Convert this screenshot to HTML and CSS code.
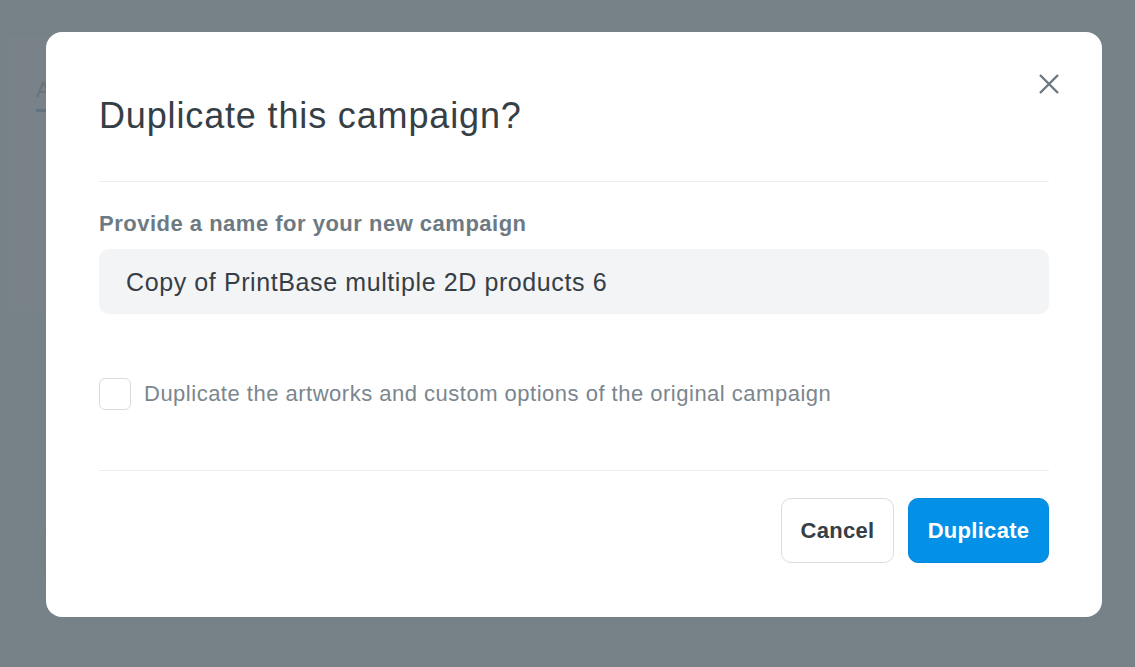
FILE: index.html
```html
<!DOCTYPE html>
<html lang="en">
<head>
  <meta charset="UTF-8">
  <title>Duplicate campaign</title>
  <link rel="stylesheet" href="styles.css">
</head>
<body>
  <div class="page">
    <div class="card">
      <div class="tabs"><span class="tab active">All</span></div>
    </div>
    <div class="field-ghost"></div>
  </div>

  <div class="overlay">
    <div class="modal">
      <button class="close" aria-label="Close">
        <svg width="20" height="20" viewBox="0 0 20 20"><path d="M1 1L19 19M19 1L1 19" stroke="#6c7780" stroke-width="2.4" fill="none"/></svg>
      </button>
      <div class="modal-header">
        <h2>Duplicate this campaign?</h2>
      </div>
      <div class="modal-body">
        <label class="field-label" for="name">Provide a name for your new campaign</label>
        <input id="name" class="field-input" type="text" value="Copy of PrintBase multiple 2D products 6">
        <label class="check">
          <span class="box"></span>
          <span>Duplicate the artworks and custom options of the original campaign</span>
        </label>
      </div>
      <div class="modal-footer">
        <button class="btn btn-default">Cancel</button>
        <button class="btn btn-primary">Duplicate</button>
      </div>
    </div>
  </div>
</body>
</html>
```

FILE: styles.css
```css
* { margin: 0; padding: 0; box-sizing: border-box; }
body {
  font-family: "Liberation Sans", Arial, sans-serif;
  background: #eef0f2;
  width: 1135px;
  height: 667px;
  overflow: hidden;
}

/* page behind the dialog */
.page { padding: 37px 0 0 8px; }
.card {
  width: 500px;
  height: 273px;
  background: #fdfdfe;
  padding: 40px 28px;
}
.tab {
  display: inline-block;
  font-size: 22px;
  color: #6c7780;
  padding-bottom: 6px;
  border-bottom: 3px solid #4a7a99;
}
.field-ghost {
  margin: 218px 0 0 36px;
  width: 300px;
  height: 52px;
  border: 1px solid #cfd4d8;
  border-radius: 8px;
}

/* dialog */
.overlay {
  position: fixed;
  inset: 0;
  background: rgba(102, 113, 121, 0.88);
  padding: 32px 0 0 46px;
}
.modal {
  position: relative;
  width: 1056px;
  height: 585px;
  background: #fff;
  border-radius: 16px;
  padding: 0 53px;
}
.close {
  position: absolute;
  top: 42px;
  right: 43px;
  width: 20px;
  height: 20px;
  border: none;
  background: none;
  cursor: pointer;
}
.close svg { display: block; }
.modal-header {
  padding: 62px 0 43px;
  border-bottom: 1px solid #eceef0;
}
.modal-header h2 {
  font-size: 36px;
  line-height: 44px;
  font-weight: normal;
  letter-spacing: 0.85px;
  color: #363e46;
}
.modal-body {
  padding: 29px 0 60px;
  border-bottom: 1px solid #eceef0;
}
.field-label {
  display: block;
  font-size: 22px;
  line-height: 26px;
  font-weight: bold;
  letter-spacing: 0.5px;
  color: #6e7a83;
  margin-bottom: 12px;
}
.field-input {
  display: block;
  width: 100%;
  height: 65px;
  border: none;
  border-radius: 10px;
  background: #f3f4f6;
  padding: 2px 27px 0;
  font-family: inherit;
  font-size: 25px;
  letter-spacing: 0.6px;
  color: #363e46;
  outline: none;
}
.check {
  display: flex;
  align-items: center;
  gap: 13px;
  margin-top: 64px;
  font-size: 22px;
  letter-spacing: 0.5px;
  color: #7b868e;
}
.box {
  width: 32px;
  height: 32px;
  border: 1px solid #d8dce0;
  border-radius: 6px;
  background: #fff;
}
.modal-footer {
  display: flex;
  justify-content: flex-end;
  gap: 14px;
  padding-top: 27px;
}
.btn {
  height: 65px;
  border-radius: 10px;
  font-family: inherit;
  font-size: 22px;
  font-weight: bold;
  letter-spacing: 0.3px;
  cursor: pointer;
}
.btn-default {
  width: 113px;
  background: #fff;
  border: 1px solid #d9dde0;
  color: #363e46;
}
.btn-primary {
  width: 141px;
  background: #0391e8;
  border: 1px solid #0388dc;
  color: #fff;
}
```
